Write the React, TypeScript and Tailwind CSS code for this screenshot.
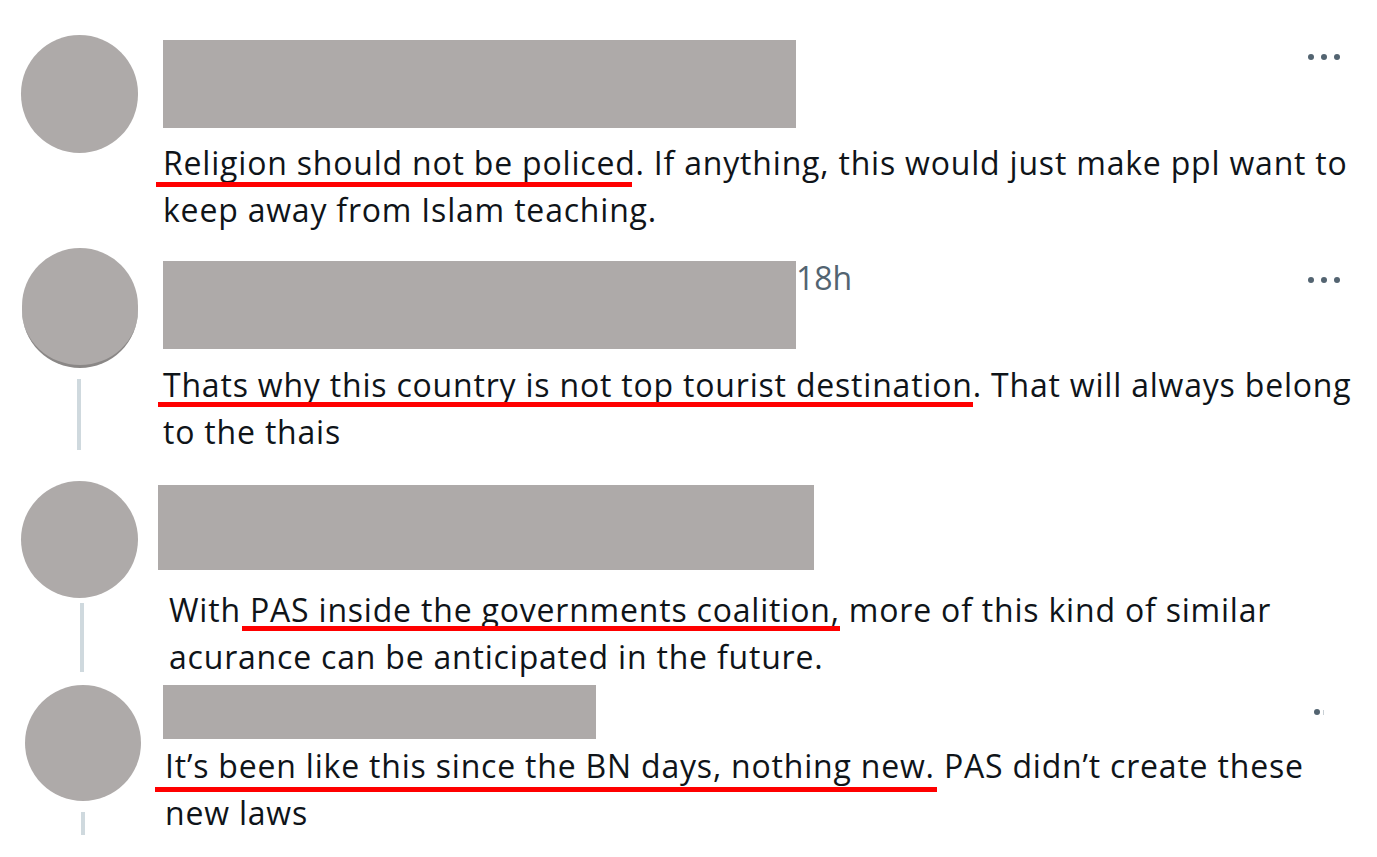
import React from 'react';

const Dots = ({ className = '' }: { className?: string }) => (
  <div className={`flex items-center gap-[7px] ${className}`}>
    <span className="w-[6px] h-[6px] rounded-full bg-[#536471]" />
    <span className="w-[6px] h-[6px] rounded-full bg-[#536471]" />
    <span className="w-[6px] h-[6px] rounded-full bg-[#536471]" />
  </div>
);

const Mark = ({ children, bar }: { children: React.ReactNode; bar: string }) => (
  <span className="relative">
    {children}
    <span className={`absolute h-[5px] bg-[#ff0000] ${bar}`} />
  </span>
);

const App: React.FC = () => {
  return (
    <div
      className="w-full h-[857px] bg-white overflow-hidden text-[32px] leading-[47px] tracking-[0.8px] text-[#0f1419]"
      style={{ fontFamily: '"Open Sans", "Noto Sans", sans-serif' }}
    >
      {/* Tweet 1 */}
      <div className="flex h-[248px] pt-[35px]">
        <div className="ml-[21px] w-[117px] flex flex-col items-center">
          <div className="w-[117px] h-[118px] rounded-full bg-[#aeaaa9]" />
        </div>
        <div className="ml-[25px] flex-1 flex flex-col">
          <div className="flex items-start">
            <div className="mt-[5px] w-[633px] h-[88px] bg-[#aeaaa9]" />
            <Dots className="ml-auto mr-[37px] mt-[19px]" />
          </div>
          <p className="mt-[11px] whitespace-nowrap">
            <Mark bar="-left-[7px] right-[4px] top-[calc(100%-2px)]">Religion should not be policed</Mark>. If anything, this would just make ppl want to
            <br />
            keep away from Islam teaching.
          </p>
        </div>
      </div>

      {/* Tweet 2 */}
      <div className="flex h-[233px]">
        <div className="ml-[22px] w-[116px] flex flex-col items-center">
          <div className="w-[116px] h-[120px] rounded-full bg-[#aeaaa9] border-b-[3px] border-[#8a8786]" />
          <div className="mt-[11px] w-[4px] h-[71px] bg-[#cfd9de] -ml-[2px]" />
        </div>
        <div className="ml-[25px] flex-1 flex flex-col">
          <div className="flex items-start">
            <div className="mt-[13px] w-[633px] h-[88px] bg-[#aeaaa9]" />
            <span className="mt-[10px] text-[32px] leading-[40px] tracking-normal text-[#536471]">18h</span>
            <Dots className="ml-auto mr-[37px] mt-[29px]" />
          </div>
          <p className="mt-[12px] whitespace-nowrap">
            <Mark bar="-left-[5px] right-[9px] top-[calc(100%-4px)]">Thats why this country is not top tourist destination.</Mark> That will always belong
            <br />
            to the thais
          </p>
        </div>
      </div>

      {/* Tweet 3 */}
      <div className="flex h-[204px]">
        <div className="ml-[21px] w-[117px] flex flex-col items-center">
          <div className="w-[117px] h-[117px] rounded-full bg-[#aeaaa9]" />
          <div className="mt-[5px] w-[4px] h-[69px] bg-[#cfd9de] ml-[5px]" />
        </div>
        <div className="ml-[20px] flex-1 flex flex-col">
          <div className="mt-[4px] w-[656px] h-[85px] bg-[#aeaaa9]" />
          <p className="mt-[16px] ml-[11px] whitespace-nowrap">
            With <Mark bar="-left-[8px] right-0 top-[calc(100%-5px)]">PAS inside the governments coalition,</Mark> more of this kind of similar
            <br />
            acurance can be anticipated in the future.
          </p>
        </div>
      </div>

      {/* Tweet 4 */}
      <div className="flex h-[172px]">
        <div className="ml-[25px] w-[116px] flex flex-col items-center">
          <div className="w-[116px] h-[116px] rounded-full bg-[#aeaaa9]" />
          <div className="mt-[11px] w-[4px] h-[23px] bg-[#cfd9de]" />
        </div>
        <div className="ml-[22px] flex-1 flex flex-col">
          <div className="flex items-start">
            <div className="w-[433px] h-[54px] bg-[#aeaaa9]" />
            <div className="ml-auto mr-[53px] mt-[24px] flex items-center gap-[3px]">
              <span className="w-[6px] h-[6px] rounded-full bg-[#536471]" />
              <span className="w-[1px] h-[5px] bg-[#c9d0d5]" />
            </div>
          </div>
          <p className="mt-[3px] ml-[2px] whitespace-nowrap">
            <Mark bar="-left-[10px] -right-[2px] top-[calc(100%+0px)]">It’s been like this since the BN days, nothing new.</Mark> PAS didn’t create these
            <br />
            new laws
          </p>
        </div>
      </div>
    </div>
  );
};

export default App;
